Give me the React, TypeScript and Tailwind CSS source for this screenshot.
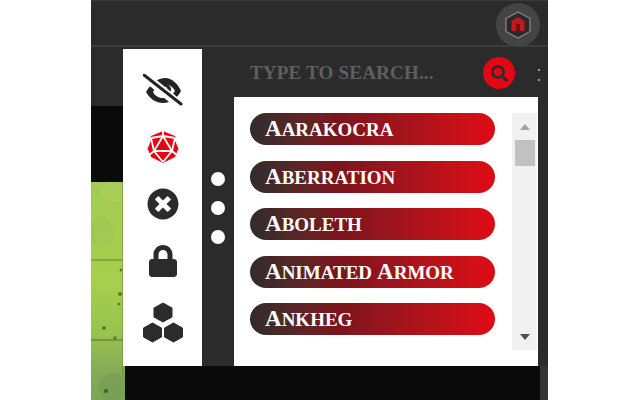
import { FaLock, FaSearch, FaTimesCircle } from 'react-icons/fa';

const monsters = ['Aarakocra', 'Aberration', 'Aboleth', 'Animated Armor', 'Ankheg'];

function EyeOffIcon() {
  return (
    <svg width="40" height="32" viewBox="0 0 40 32">
      <path d="M3 18 C9 7 17 4 22 4 C29 4 35 10 38 17 C34 25 27 29 20 29 C13 29 7 25 3 18 Z" fill="#232323" />
      <path d="M10 18 C13 12 17 10 21 10 C26 10 30 13 32 17 C29 22 25 24 20 24 C16 24 12 22 10 18 Z" fill="#fff" />
      <path d="M17 11 C19 8 27 9 28 15 C28 18 27 20 25 21 Z" fill="#232323" />
      <path d="M21 13 C23 12 25 14 24 17 Z" fill="#fff" />
      <path d="M-2 -1 L38 32" stroke="#fff" strokeWidth="9" />
      <path d="M1 1 L38 30" stroke="#232323" strokeWidth="3" strokeLinecap="round" />
    </svg>
  );
}

function D20Icon() {
  return (
    <svg width="32" height="32" viewBox="0 0 32 32">
      <path d="M16 0 L28 5 L32 16 L28 26 L16 32 L4 26 L0 16 L4 5 Z" fill="#e30613" />
      <g stroke="#fff" strokeWidth="1.8" fill="none">
        <path d="M16 5 L7 20 L25 20 Z" />
        <path d="M16 0 L16 5 M16 5 L4 7 M16 5 L28 7 M4 7 L7 20 M28 7 L25 20 M4 7 L0 17 M28 7 L32 17 M7 20 L1 25 M25 20 L31 25 M7 20 L16 31 M25 20 L16 31" />
      </g>
    </svg>
  );
}

function HexClusterIcon() {
  return (
    <svg width="40" height="41" viewBox="0 0 40 41" fill="#2b2b2b" stroke="#2b2b2b" strokeWidth="1" strokeLinejoin="round">
      <path d="M20 1 L29 6 L29 15 L20 20 L11 15 L11 6 Z" />
      <path d="M9.5 21 L18.5 26 L18.5 35 L9.5 40 L0.5 35 L0.5 26 Z" />
      <path d="M30.5 21 L39.5 26 L39.5 35 L30.5 40 L21.5 35 L21.5 26 Z" />
    </svg>
  );
}

function HeaderBadge() {
  return (
    <svg width="26" height="28" viewBox="0 0 26 28">
      <path d="M13 1 L25 7.5 L25 20.5 L13 27 L1 20.5 L1 7.5 Z" fill="#2a2a2a" stroke="#8a8a8a" strokeWidth="1.2" />
      <path d="M13 6 L19.5 10 L19.5 20 L6.5 20 L6.5 10 Z" fill="#c8141d" />
      <path d="M11 20 L11 13 L15 13 L15 20 Z" fill="#6a1318" />
    </svg>
  );
}

function MapTexture() {
  return (
    <svg width="34" height="218" viewBox="0 0 34 218" className="block">
      <defs>
        <linearGradient id="map" x1="0" y1="0" x2="0" y2="1">
          <stop offset="0" stopColor="#a3cb54" />
          <stop offset="0.45" stopColor="#a5cf4c" />
          <stop offset="0.7" stopColor="#99c24e" />
          <stop offset="0.85" stopColor="#86ad55" />
          <stop offset="1" stopColor="#7ba556" />
        </linearGradient>
        <filter id="soft">
          <feGaussianBlur stdDeviation="0.7" />
        </filter>
      </defs>
      <rect width="34" height="218" fill="url(#map)" />
      <g filter="url(#soft)">
        <ellipse cx="10" cy="50" rx="12" ry="16" fill="#9bc557" opacity="0.5" />
        <ellipse cx="22" cy="10" rx="12" ry="10" fill="#b0cf5c" opacity="0.4" />
        <ellipse cx="22" cy="205" rx="14" ry="14" fill="#6f9a52" opacity="0.5" />
        <path d="M0 78 H32" stroke="#7d9645" strokeWidth="1.5" />
        <path d="M0 158 H32" stroke="#6c8540" strokeWidth="1.5" />
        <circle cx="30" cy="88" r="1.5" fill="#5d7a36" />
        <circle cx="29" cy="112" r="2" fill="#5d7a36" />
        <circle cx="28" cy="122" r="1.5" fill="#5d7a36" />
        <circle cx="13" cy="146" r="1.7" fill="#4a6630" />
        <circle cx="24" cy="156" r="1.7" fill="#5d7a36" />
        <circle cx="15" cy="209" r="2" fill="#3c6036" />
        <path d="M32 0 V196" stroke="#7c9347" strokeWidth="1.5" />
      </g>
    </svg>
  );
}

export default function App() {
  return (
    <div className="w-[640px] h-[400px] bg-white pl-[91px] overflow-hidden font-['Liberation_Serif',serif]">
      <div className="w-[457px] h-full flex flex-col bg-[#2b2b2b]">
        {/* top bar */}
        <div className="h-[47px] shrink-0 flex justify-end pr-[8px] pt-[2px] border-t border-[#3a3a3a] border-b-2 border-b-[#3c3c3c]">
          <div className="w-[44px] h-[44px] shrink-0 rounded-full bg-[#444444] flex items-center justify-center">
            <HeaderBadge />
          </div>
        </div>

        <div className="flex-1 flex min-h-0">
          {/* board behind the panel */}
          <div className="w-[34px] shrink-0 flex flex-col">
            <div className="h-[59px] bg-[#2b2b2b]" />
            <div className="h-[76px] bg-[#0a0a0a]" />
            <MapTexture />
          </div>

          <div className="w-[425px] -ml-[2px] relative flex flex-col">
            <div className="h-[319px] flex bg-[#2b2b2b]">
              {/* tool rail */}
              <div className="w-[79px] mt-[2px] bg-white flex flex-col items-center pt-[25px] gap-[25px]">
                <EyeOffIcon />
                <D20Icon />
                <FaTimesCircle className="w-[32px] h-[32px] text-[#2b2b2b]" />
                <FaLock className="w-[32px] h-[32px] text-[#2b2b2b]" />
                <HexClusterIcon />
              </div>

              <div className="w-[32px] flex flex-col items-center justify-center gap-[15px] pt-[2px]">
                <div className="w-[14px] h-[14px] rounded-full bg-white" />
                <div className="w-[14px] h-[14px] rounded-full bg-white" />
                <div className="w-[14px] h-[14px] rounded-full bg-white" />
              </div>

              <div className="w-[304px] flex flex-col">
                {/* search */}
                <div className="h-[50px] shrink-0 flex items-center justify-between pl-[16px] pr-[23px] pt-[2px]">
                  <span className="text-[19px] font-bold text-[#5f5f5f] tracking-[0.2px] whitespace-nowrap">TYPE TO SEARCH...</span>
                  <div className="w-[32px] h-[32px] rounded-full bg-[#e30613] flex items-center justify-center">
                    <FaSearch className="w-[17px] h-[17px] text-[#2b2b2b]" />
                  </div>
                </div>

                {/* monster list */}
                <div className="flex-1 bg-white flex pl-[16px] pt-[16px]">
                  <div className="w-[245px] flex flex-col gap-[15.5px]">
                    {monsters.map((m) => (
                      <div
                        key={m}
                        className="h-[32px] rounded-full bg-gradient-to-r from-[#2f2b2d] via-[#7a141c] via-[35%] to-[#e00a14] pl-[15px] leading-[31px] text-[19px] font-bold uppercase text-white whitespace-nowrap"
                      >
                        {m.split(' ').map((word) => (
                          <span key={word} className="inline-block mr-[5px] first-letter:text-[23px]">{word}</span>
                        ))}
                      </div>
                    ))}
                  </div>
                  {/* scrollbar */}
                  <div className="w-[25px] h-[237px] ml-[17px] bg-[#f1f1f1] flex flex-col items-center">
                    <div className="h-[27px] shrink-0 flex items-center justify-center pt-[1px]">
                      <div className="w-0 h-0 border-x-[5px] border-x-transparent border-b-[6px] border-b-[#a3a3a3]" />
                    </div>
                    <div className="w-[20px] h-[26px] bg-[#c1c1c1]" />
                    <div className="flex-1" />
                    <div className="h-[27px] shrink-0 flex items-center justify-center">
                      <div className="w-0 h-0 border-x-[5px] border-x-transparent border-t-[6px] border-t-[#505050]" />
                    </div>
                  </div>
                </div>
              </div>

              <div className="w-[10px] flex flex-col items-start gap-[8px] pt-[22px]">
                <div className="w-[2px] h-[2px] bg-[#8fa3a8]" />
                <div className="w-[2px] h-[2px] bg-[#8fa3a8]" />
              </div>
            </div>

            {/* bottom bar */}
            <div className="flex-1 flex ml-[2px]">
              <div className="flex-1 bg-[#0a0a0a]" />
              <div className="w-[8px] bg-[#333333]" />
            </div>
          </div>
        </div>
      </div>
    </div>
  );
}
